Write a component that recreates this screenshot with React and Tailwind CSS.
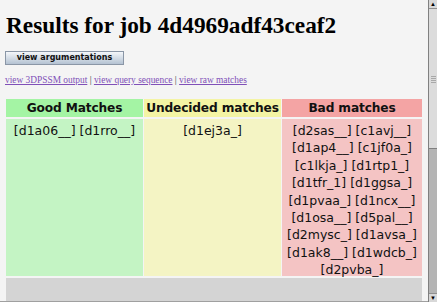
import React from 'react'

const good = ['[d1a06__] [d1rro__]']
const undecided = ['[d1ej3a_]']
const bad = [
  '[d2sas__] [c1avj__]',
  '[d1ap4__] [c1jf0a_]',
  '[c1lkja_] [d1rtp1_]',
  '[d1tfr_1] [d1ggsa_]',
  '[d1pvaa_] [d1ncx__]',
  '[d1osa__] [d5pal__]',
  '[d2mysc_] [d1avsa_]',
  '[d1ak8__] [d1wdcb_]',
  '[d2pvba_]',
]

const columns = [
  {title: 'Good Matches', head: 'bg-[#a4f4a4]', body: 'bg-[#c4f4c4]', items: good},
  {title: 'Undecided matches', head: 'bg-[#f4f4a4]', body: 'bg-[#f4f4c4]', items: undecided},
  {title: 'Bad matches', head: 'bg-[#f4a4a4]', body: 'bg-[#f4c4c4]', items: bad},
]

const Scrollbar = () => (
  <div className="w-[9px] h-[302px] flex flex-col border-l border-[#808080] bg-[#b4b4b4]">
    <div className="h-[9px] bg-[#d8d8d8] border-b border-[#909090] flex items-center justify-center text-[6px] leading-none text-black">▲</div>
    <div className="h-[140px] bg-[#dcdcdc] border-b border-[#808080] flex flex-col items-center pt-[67px] gap-[1px]">
      <div className="w-[5px] h-[1px] bg-[#a8a8a8]" />
      <div className="w-[5px] h-[1px] bg-[#a8a8a8]" />
      <div className="w-[5px] h-[1px] bg-[#a8a8a8]" />
      <div className="w-[5px] h-[1px] bg-[#a8a8a8]" />
    </div>
    <div className="flex-1" />
    <div className="h-[9px] bg-[#d8d8d8] border-t border-[#909090] flex items-center justify-center text-[6px] leading-none text-black">▼</div>
  </div>
)

const App = () => {
  return (
    <div className="w-[437px] h-[302px] overflow-hidden flex bg-[#f4f4f4]">
      <div className="flex-1 flex flex-col overflow-hidden">
        <div className="px-[6px]">
          <h1 className="mt-[12px] text-[23.3px] leading-[26px] font-bold text-black font-['Liberation_Serif',serif] whitespace-nowrap">
            Results for job 4d4969adf43ceaf2
          </h1>
          <button className="mt-[13px] ml-[-1px] w-[119px] h-[14px] border border-[#8a96a6] bg-gradient-to-b from-[#f4f7fa] to-[#b4c2d2] text-[8px] leading-none text-[#111] font-semibold font-['DejaVu_Sans',sans-serif] flex items-center justify-center">
            view argumentations
          </button>
          <div className="mt-[9px] text-[9.4px] leading-[12px] text-[#333] font-['Liberation_Serif',serif] ml-[-1px] whitespace-nowrap">
            <a className="text-[#8050b8] underline">view 3DPSSM output</a> | <a className="text-[#8050b8] underline">view query sequence</a> | <a className="text-[#8050b8] underline">view raw matches</a>
          </div>
        </div>
        <div className="mt-[13px] ml-[6px] w-[416px] grid grid-cols-[137px_137px_140px] gap-x-[1px] gap-y-[2px] font-['DejaVu_Sans',sans-serif] text-[12.5px] text-[#111]">
          {columns.map(c => (
            <div key={c.title} className={`${c.head} h-[18px] flex items-center justify-center font-bold leading-none whitespace-nowrap text-[12.2px] tracking-[-0.15px]`}>{c.title}</div>
          ))}
          {columns.map(c => (
            <div key={c.title + 'b'} className={`${c.body} h-[157px] pt-[3px] text-center leading-[17.4px]`}>
              {c.items.map((it, idx) => <div key={idx}>{it}</div>)}
            </div>
          ))}
          <div className="col-span-3 h-[23px] bg-[#d4d4d4]" />
        </div>
        <div className="flex-1" />
        <div className="h-[2px] bg-[#a0a0a0]" />
      </div>
      <Scrollbar />
    </div>
  )
}

export default App
